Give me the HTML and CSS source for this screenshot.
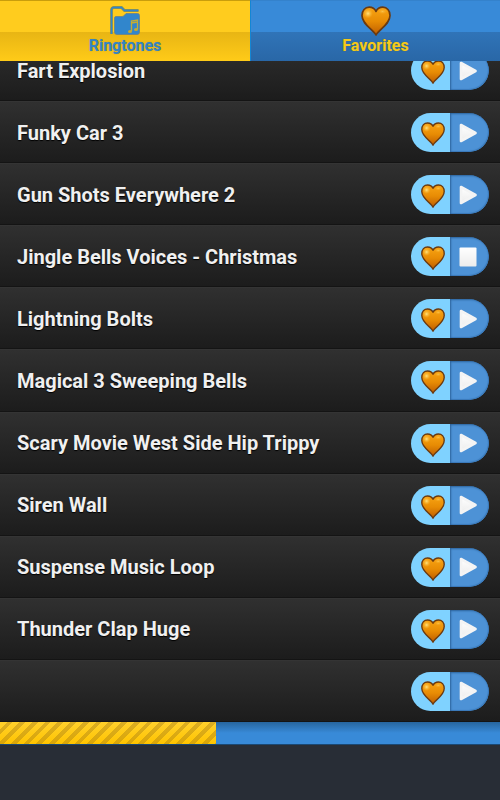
FILE: index.html
```html
<!DOCTYPE html>
<html lang="en">
<head>
<meta charset="utf-8">
<meta name="viewport" content="width=device-width, initial-scale=1">
<title>Ringtones</title>
<link rel="stylesheet" href="styles.css">
</head>
<body>
<svg class="defs" width="0" height="0" aria-hidden="true">
  <defs>
    <linearGradient id="amber" x1="0" y1="0" x2="0" y2="1">
      <stop offset="0" stop-color="#f8a414"/>
      <stop offset=".5" stop-color="#e88c04"/>
      <stop offset="1" stop-color="#bd5c00"/>
    </linearGradient>
    <radialGradient id="shine">
      <stop offset="0" stop-color="#ffe480"/>
      <stop offset="1" stop-color="#ffb830" stop-opacity="0"/>
    </radialGradient>
    <linearGradient id="paper" x1="0" y1="0" x2="0" y2="1">
      <stop offset="0" stop-color="#ffffff"/>
      <stop offset="1" stop-color="#ececec"/>
    </linearGradient>
  </defs>
  <symbol id="heart" viewBox="0 0 30 30">
    <path d="M15 29C12.500 23.500 1 18.500 1 9.500C1 4.500 4 1.200 8.200 1.200C11.400 1.200 13.800 2.800 15 5.400C16.200 2.800 18.600 1.200 21.800 1.200C26 1.200 29 4.500 29 9.500C29 18.500 17.500 23.500 15 29Z" fill="url(#amber)" stroke="#6b3a10" stroke-width="1.700" stroke-linejoin="round"/>
    <ellipse cx="7" cy="7.500" rx="5" ry="5" fill="url(#shine)"/>
    <ellipse cx="21.500" cy="5.500" rx="4.500" ry="2.600" fill="url(#shine)" opacity=".5"/>
  </symbol>
  <symbol id="play" viewBox="0 0 18 20">
    <path d="M2 2L16.500 10L2 18Z" fill="url(#paper)" stroke="#f4f4f4" stroke-width="2.600" stroke-linejoin="round"/>
  </symbol>
  <symbol id="stop" viewBox="0 0 18 20">
    <rect x=".5" y=".5" width="17" height="19" rx="1" fill="url(#paper)"/>
  </symbol>
</svg>

<nav class="tabs">
  <a class="tab tab-ringtones" href="#ringtones" aria-current="page">
    <svg class="tab-icon" viewBox="0 0 30 30" aria-hidden="true">
      <path d="M1.500 28V4Q1.500 1.500 4 1.500H11.500L14.500 4.500H28.500" fill="none" stroke="#8d9252" stroke-width="2.800"/>
      <path d="M1.500 28V4Q1.500 1.500 4 1.500H11.500L14.500 4.500H28.500" fill="none" stroke="#3186cc" stroke-width="1.400"/>
      <path d="M4.500 12Q4.500 10.500 6 10.500H12Q13.500 10.500 14.500 9L16 7.500H27.500Q29.500 7.500 29.500 9.500V26Q29.500 28.500 27 28.500H7Q4.500 28.500 4.500 26Z" fill="#3186cc" stroke="#68828a" stroke-width=".8"/>
      <path d="M21.500 25V15L27.500 14V23M21.500 17L27.500 16" fill="none" stroke="#c3ac35" stroke-width="1.300"/>
      <ellipse cx="20" cy="25.500" rx="2" ry="1.600" fill="#c3ac35"/>
      <ellipse cx="26" cy="23.500" rx="2" ry="1.600" fill="#c3ac35"/>
    </svg>
    <span>Ringtones</span>
  </a>
  <a class="tab tab-favorites" href="#favorites">
    <svg class="tab-icon" aria-hidden="true"><use href="#heart"/></svg>
    <span>Favorites</span>
  </a>
</nav>

<main class="viewport">
  <ul class="list" id="ringtones"></ul>
</main>

<div class="progress" role="progressbar" aria-label="Playback" aria-valuenow="43" aria-valuemin="0" aria-valuemax="100">
  <div class="progress-fill"></div>
</div>
<footer class="footer"></footer>
<script src="app.js"></script>
</body>
</html>
```
FILE: styles.css
```css
* {
  box-sizing: border-box;
}

body {
  margin: 0;
  height: 100vh;
  display: flex;
  flex-direction: column;
  background: #282d36;
  color: #f0f0f0;
  font-family: Roboto, "Liberation Sans", sans-serif;
  font-weight: 700;
}

.defs {
  position: absolute;
}

.tabs {
  flex: none;
  display: grid;
  grid-template-columns: 1fr 1fr;
}

.tab {
  height: 61px;
  padding-top: 5px;
  display: flex;
  flex-direction: column;
  align-items: center;
  font-size: 16px;
  line-height: 20px;
  text-decoration: none;
}

.tab-icon {
  width: 30px;
  height: 30px;
}

.tab-ringtones {
  color: #3484c2;
  background: linear-gradient(#ffcc1e 0 31px, #e8b514 31px, #ffcb18 100%);
  border-top: 1px solid #c99d0c;
  text-shadow: 0 0 1px #a58e34;
}

.tab-favorites {
  color: #f5ca1c;
  background: linear-gradient(#388ad8 0 31px, #3074b8 31px, #2967a7 100%);
  border-top: 1px solid #3482cc;
  border-left: 1px solid #1486d4;
  text-shadow: 0 0 1px #54643c;
}

.viewport {
  flex: 1;
  min-height: 0;
  overflow: hidden;
  display: flex;
  flex-direction: column;
  justify-content: flex-end;
  background: #222222;
}

.list {
  flex: none;
  height: calc(100% + 22px);
  margin: 0;
  padding: 0;
  list-style: none;
  display: grid;
  grid-auto-rows: 1fr;
}

.row {
  display: flex;
  align-items: center;
  justify-content: space-between;
  padding: 1px 11px 0 17px;
  background: linear-gradient(#303030, #1c1c1c);
  border-top: 1px solid #343434;
  border-bottom: 1px solid #141414;
  font-size: 20px;
  line-height: 16px;
  text-shadow: 0 1px 1px #000000;
}

.actions {
  display: grid;
  grid-template-columns: 1fr 1fr;
  width: 78px;
  height: 39px;
  border-radius: 20px;
  overflow: hidden;
}

.action {
  display: flex;
  align-items: center;
  justify-content: center;
  margin: 0;
  padding: 0;
  border: 0;
}

.action-favorite {
  padding-left: 4px;
  padding-top: 3px;
  background: #7fd2ff;
}

.action-play {
  padding-right: 3px;
  background: #4d92d6;
  border-radius: 0 20px 20px 0;
  box-shadow: inset 1px 1px 2px #2c639d, inset -1px -1px 1px #3c7bbb;
}

.heart {
  width: 24px;
  height: 24px;
}

.glyph {
  width: 18px;
  height: 20px;
}

.progress {
  flex: none;
  height: 23px;
  background: linear-gradient(#27659e, #388ad8 50%);
  border-bottom: 1px solid #1b4873;
}

.progress-fill {
  width: 43.2%;
  height: 100%;
  background:
    repeating-linear-gradient(135deg, transparent 0 5px, rgba(150, 110, 20, 0.35) 5px 9px),
    linear-gradient(#ffd02c, #ffc400);
}

.footer {
  flex: none;
  height: 55px;
  background: #282d36;
}
```
FILE: app.js
```js
const tracks = [
  "Fart Explosion",
  "Funky Car 3",
  "Gun Shots Everywhere 2",
  "Jingle Bells Voices - Christmas",
  "Lightning Bolts",
  "Magical 3 Sweeping Bells",
  "Scary Movie West Side Hip Trippy",
  "Siren Wall",
  "Suspense Music Loop",
  "Thunder Clap Huge",
  ""
];
const playing = 3;

document.getElementById("ringtones").innerHTML = tracks.map((name, i) => {
  const icon = i === playing ? "stop" : "play";
  return `<li class="row">
    <span>${name}</span>
    <div class="actions">
      <button class="action action-favorite" type="button" aria-label="Favorite ${name}">
        <svg class="heart"><use href="#heart"/></svg>
      </button>
      <button class="action action-play" type="button" aria-label="${icon} ${name}">
        <svg class="glyph"><use href="#${icon}"/></svg>
      </button>
    </div>
  </li>`;
}).join("");
```
